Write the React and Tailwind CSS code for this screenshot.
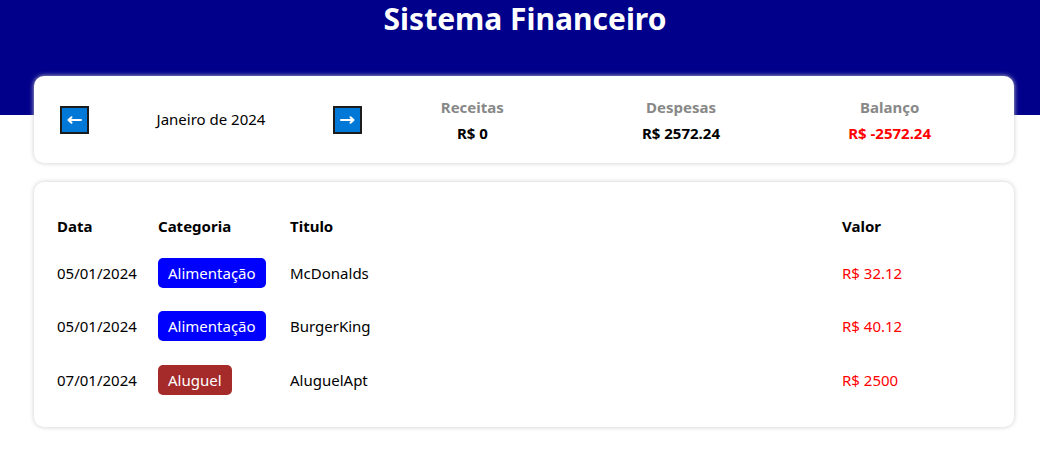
import React from 'react';

const items = [
  { date: '05/01/2024', category: 'Alimentação', color: 'bg-[#0000ff]', title: 'McDonalds', value: 32.12 },
  { date: '05/01/2024', category: 'Alimentação', color: 'bg-[#0000ff]', title: 'BurgerKing', value: 40.12 },
  { date: '07/01/2024', category: 'Aluguel', color: 'bg-[#a52a2a]', title: 'AluguelApt', value: 2500 },
];

const ResumeItem = ({ label, value, valueClass = 'text-black' }) => (
  <div className="w-1/3 flex flex-col items-center">
    <div className="text-[15px] font-bold text-[#888] leading-[26px]">{label}</div>
    <div className={`text-[15px] font-bold leading-[26px] ${valueClass}`}>{value}</div>
  </div>
);

const NavButton = ({ dir }) => (
  <button className="w-[29px] h-[28px] bg-[#0078d7] border-2 border-[#1c1c1c] flex items-center justify-center">
    <svg width="15" height="8" viewBox="0 0 15 8" fill="none" stroke="white" strokeWidth="2" strokeLinecap="round" strokeLinejoin="round">
      {dir === 'left' ? (
        <path d="M1.5 4H14M4.5 1.2L1.5 4l3 2.8" />
      ) : (
        <path d="M13.5 4H1M10.5 1.2L13.5 4l-3 2.8" />
      )}
    </svg>
  </button>
);

export default function App() {
  const expense = items.reduce((s, i) => s + i.value, 0);

  return (
    <div className="min-h-[470px] bg-white font-['Noto_Sans',sans-serif] text-black">
      {/* Header */}
      <div className="h-[115px] bg-[#00008b] text-center">
        <h1 className="text-white text-[30px] font-bold leading-[38px] pl-[10px]">Sistema Financeiro</h1>
      </div>

      <div className="ml-[34px] w-[980px] -mt-[39px]">
        {/* Info area */}
        <div className="bg-white rounded-[10px] shadow-[0_0_5px_#ccc] px-5 flex items-center h-[87px]">
          <div className="w-[314px] flex items-center pl-[6px] pr-[6px]">
            <NavButton dir="left" />
            <div className="flex-1 text-center text-[15px]">Janeiro de 2024</div>
            <NavButton dir="right" />
          </div>
          <div className="flex-1 flex">
            <ResumeItem label="Receitas" value="R$ 0" />
            <ResumeItem label="Despesas" value={`R$ ${expense.toFixed(2)}`} />
            <ResumeItem label="Balanço" value={`R$ ${(0 - expense).toFixed(2)}`} valueClass="text-[#ff0000]" />
          </div>
        </div>

        {/* Table */}
        <div className="bg-white rounded-[10px] shadow-[0_0_5px_#ccc] p-5 mt-[19px] text-[15px]">
          <div className="grid grid-cols-[101px_132px_1fr_152px] pl-[3px] h-[44px] pt-[4px] items-center font-bold">
            <div>Data</div>
            <div>Categoria</div>
            <div>Titulo</div>
            <div>Valor</div>
          </div>
          {items.map((item, idx) => (
            <div key={idx} className="grid grid-cols-[101px_132px_1fr_152px] pl-[3px] h-[53.5px] items-center">
              <div>{item.date}</div>
              <div>
                <span className={`inline-block ${item.color} text-white rounded-[5px] px-[10px] py-[3px] leading-[24px]`}>
                  {item.category}
                </span>
              </div>
              <div>{item.title}</div>
              <div className="text-[#ff0000]">R$ {item.value}</div>
            </div>
          ))}
        </div>
      </div>
    </div>
  );
}
